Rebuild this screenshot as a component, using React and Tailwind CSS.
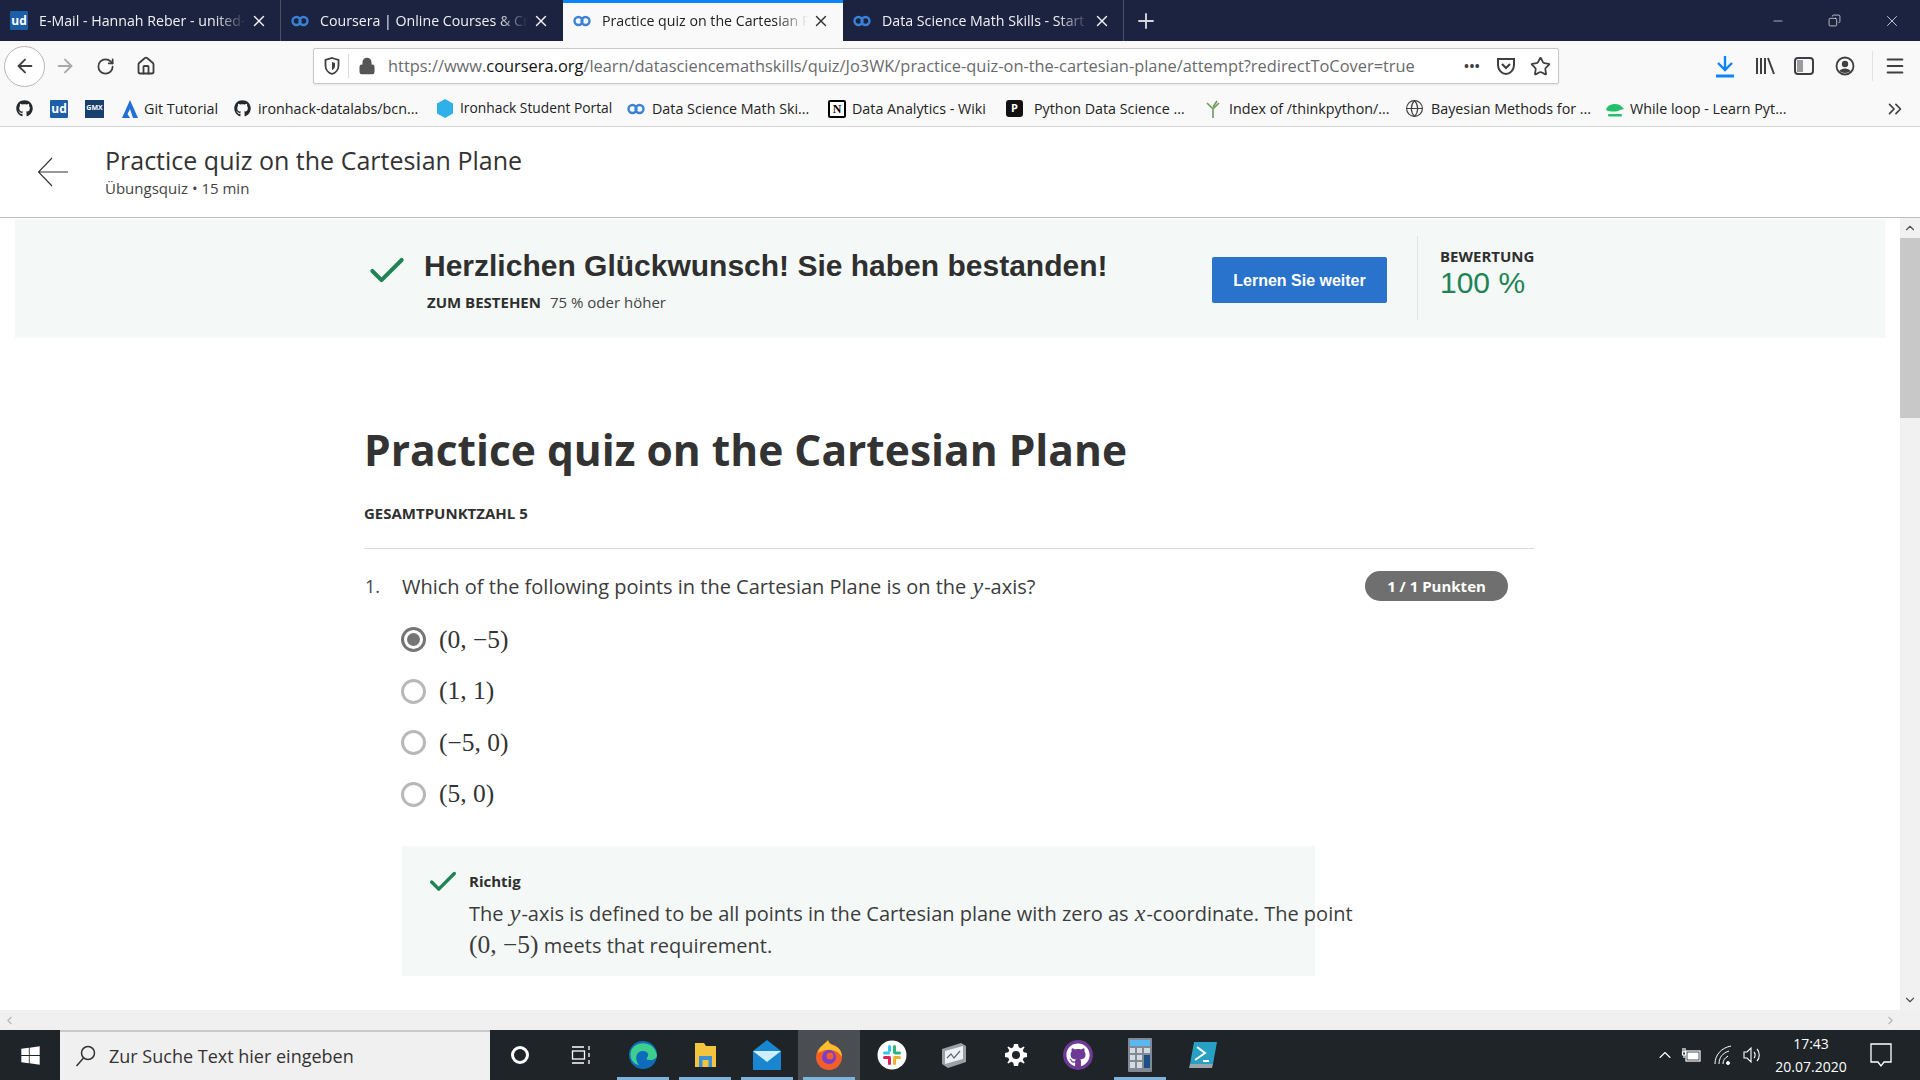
import React from "react";
import { ArrowLeft, ArrowRight, RotateCw, Home, Lock, Star, ChevronsRight, Globe, X, Plus, Minus, ChevronUp, ChevronDown, ChevronLeft, ChevronRight, Check, Menu, Copy, ChevronUp as Caret } from "lucide-react";
import { FaGithub, FaWindows } from "react-icons/fa";

const Co = () => (
  <svg width="18" height="12" viewBox="0 0 18 12" className="shrink-0">
    <circle cx="5.5" cy="6" r="4" fill="none" stroke="#3b82d6" strokeWidth="2.4" />
    <circle cx="12.5" cy="6" r="4" fill="none" stroke="#3b82d6" strokeWidth="2.4" />
  </svg>
);
const Ud = ({ s = "w-[18px] h-[19px] text-[12px]" }) => (
  <div className={`${s} bg-[#1d5ea8] text-white font-bold flex items-center justify-center leading-none shrink-0 rounded-[1px]`}>ud</div>
);

const tabs = [
  { t: "E-Mail - Hannah Reber - united-internet", i: <Ud />, w: "w-[281px]", b: true },
  { t: "Coursera | Online Courses & Credentials", i: <Co />, w: "w-[282px]" },
  { t: "Practice quiz on the Cartesian Plane", i: <Co />, w: "w-[280px]", a: true },
  { t: "Data Science Math Skills - Start here", i: <Co />, w: "w-[281px]", b: true },
];

const marks = [
  { w: "w-[35px]", i: <FaGithub className="w-[17px] h-[17px] text-[#24292e] ml-[1px]" /> },
  { w: "w-[35px]", i: <Ud s="w-[18px] h-[18px] text-[12px]" /> },
  { w: "w-[36px]", i: <div className="w-[19px] h-[18px] bg-[#17406f] text-white text-[7px] font-bold flex items-center justify-center">GMX</div> },
  { w: "w-[113px]", i: <svg width="18" height="18" viewBox="0 0 18 18" className="mr-[5px]"><path d="M9 0 L17 18 L12 18 L9 9 L6.5 14 L9 18 L1 18 Z" fill="#1f6fd6" /></svg>, t: "Git Tutorial" },
  { w: "w-[201px]", i: <FaGithub className="w-[17px] h-[17px] text-[#24292e] mr-[7px]" />, t: "ironhack-datalabs/bcn..." },
  { w: "w-[192px]", i: <svg width="18" height="19" viewBox="0 0 18 19" className="mr-[6px] ml-[1px]"><path d="M9 0 L17 4.5 V14.5 L9 19 L1 14.5 V4.5 Z" fill="#2db1e8" /></svg>, t: "Ironhack Student Portal", c: "text-[13.8px]" },
  { w: "w-[201px]", i: <span className="mr-[7px] flex"><Co /></span>, t: "Data Science Math Ski..." },
  { w: "w-[178px]", i: <div className="w-[18px] h-[18px] border-2 border-black bg-white text-black text-[12px] font-bold font-['Liberation_Serif',serif] flex items-center justify-center mr-[6px] rounded-[2px]">N</div>, t: "Data Analytics - Wiki" },
  { w: "w-[199px]", i: <div className="w-[17px] h-[17px] bg-[#111] text-white text-[11px] font-bold flex items-center justify-center mr-[11px] rounded-[3px]">P</div>, t: "Python Data Science ..." },
  { w: "w-[200px]", i: <svg width="16" height="18" viewBox="0 0 16 18" className="mr-[8px]"><path d="M8 18 V8 M8 9 L2 3 M8 9 L14 3 M8 7 L12 1" stroke="#6f9a5c" strokeWidth="1.6" fill="none" /></svg>, t: "Index of /thinkpython/..." },
  { w: "w-[200px]", i: <Globe className="w-[19px] h-[19px] text-[#444] mr-[7px]" strokeWidth={1.5} />, t: "Bayesian Methods for ..." },
  { w: "w-[279px]", i: <svg width="20" height="16" viewBox="0 0 20 16" className="mr-[5px]"><path d="M1 9 C2 2 14 1 17 6 L19 8 L15 9 C12 11 5 11 1 9 Z" fill="#21c26b" /><rect x="3" y="13" width="14" height="2.5" rx="1" fill="#21c26b" /></svg>, t: "While loop - Learn Pyt..." },
];

const Tb = ({ w, active, line, children }) => (
  <div className={`${w} h-[50px] relative flex items-center justify-center ${active ? "bg-[#4a4e52]" : ""}`}>
    {children}
    {line && <div className={`absolute bottom-0 left-[5px] right-[5px] h-[3px] bg-[#7db4de]`} />}
  </div>
);

const options = ["(0, −5)", "(1, 1)", "(−5, 0)", "(5, 0)"];

export default function App() {
  return (
    <div className="w-[1920px] h-[1080px] overflow-hidden flex flex-col font-['Open_Sans',sans-serif] bg-white text-[#3c3c3c]">
      {/* tab strip */}
      <div className="h-[41px] bg-[#1c2340] flex shrink-0 text-[14.2px]">
        {tabs.map((tab) => (
          <div key={tab.t} className={`${tab.w} h-[41px] flex items-center pl-[10px] pr-[13px] relative ${tab.a ? "bg-[#f9f9fa] text-[#222]" : "text-[#f0f0f2]"}`}>
            {tab.a && <div className="absolute top-0 left-0 right-0 h-[3px] bg-[#0a84ff]" />}
            {tab.b && <div className="absolute right-0 top-0 bottom-0 w-px bg-[#4a5068]" />}
            <div className="w-[19px] flex items-center">{tab.i}</div>
            <div className="ml-[10px] flex-1 overflow-hidden whitespace-nowrap [mask-image:linear-gradient(to_right,black_85%,transparent_100%)]">{tab.t}</div>
            <X className={`w-[18px] h-[18px] ml-[4px] shrink-0 ${tab.a ? "text-[#333]" : "text-[#f0f0f2]"}`} strokeWidth={1.9} />
          </div>
        ))}
        <div className="w-[43px] flex items-center justify-center"><Plus className="w-[24px] h-[24px] text-[#d6d7dc]" strokeWidth={1.9} /></div>
        <div className="flex-1" />
        <div className="w-[57px] flex items-center justify-center"><Minus className="w-[14px] h-[14px] text-[#e6e6ea]" strokeWidth={1.2} /></div>
        <div className="w-[57px] flex items-center justify-center"><Copy className="w-[13px] h-[13px] text-[#e6e6ea] -scale-x-100" strokeWidth={1.4} /></div>
        <div className="w-[57px] flex items-center justify-center"><X className="w-[18px] h-[18px] text-[#e6e6ea]" strokeWidth={1.1} /></div>
      </div>

      {/* toolbar */}
      <div className="h-[50px] bg-[#f9f9fa] flex items-center shrink-0 relative">
        <div className="w-[41px] h-[41px] ml-[4px] rounded-full border border-[#b5b5b5] bg-white flex items-center justify-center"><ArrowLeft className="w-[22px] h-[22px] text-[#3f3f42]" strokeWidth={2} /></div>
        <ArrowRight className="w-[22px] h-[22px] ml-[9px] text-[#a8a8aa]" strokeWidth={2} />
        <RotateCw className="w-[19px] h-[19px] ml-[20px] text-[#3f3f42]" strokeWidth={2.2} />
        <Home className="w-[20px] h-[20px] ml-[21px] text-[#3f3f42]" strokeWidth={2.2} />
        <div className="w-[1246px] h-[36px] ml-[157px] bg-white border border-[#c8c8c8] rounded-[2px] flex items-center shadow-[0_1px_2px_rgba(0,0,0,0.08)]">
          <svg width="16" height="18" viewBox="0 0 16 18" className="ml-[10px]"><path d="M8 1 L14.5 3 V9 C14.5 13 11 16 8 17 C5 16 1.5 13 1.5 9 V3 Z" fill="none" stroke="#3f3f42" strokeWidth="1.8" /><path d="M8 5 L11 6 V9 C11 11 9.5 12.5 8 13 Z" fill="#3f3f42" /></svg>
          <div className="w-px h-[24px] bg-[#dcdcdc] ml-[8px]" />
          <Lock className="w-[18px] h-[18px] ml-[9px] text-[#555] fill-[#555]" strokeWidth={2} />
          <div className="ml-[12px] text-[16.4px] text-[#6a6a6d] whitespace-nowrap w-[1029px] overflow-hidden">https://www.<span className="text-[#111]">coursera.org</span>/learn/datasciencemathskills/quiz/Jo3WK/practice-quiz-on-the-cartesian-plane/attempt?redirectToCover=true</div>
          <div className="ml-[47px] text-[#3f3f42] text-[13px] font-bold tracking-[0.5px] leading-none">•••</div>
          <svg width="20" height="20" viewBox="0 0 20 20" className="ml-[16px]"><path d="M2 3 H18 V9 C18 14 14 18 10 18 C6 18 2 14 2 9 Z" fill="none" stroke="#3f3f42" strokeWidth="2" /><path d="M6 8 L10 12 L14 8" fill="none" stroke="#3f3f42" strokeWidth="2.2" /></svg>
          <Star className="w-[21px] h-[21px] ml-[14px] text-[#3f3f42]" strokeWidth={2} />
        </div>
        <svg width="22" height="24" viewBox="0 0 22 24" fill="none" stroke="#0a84ff" strokeWidth="2.4" className="ml-[155px]"><path d="M11 2 V15 M4 9 L11 16 L18 9" /><path d="M2 22 H20" strokeWidth="3" /></svg>
        <svg width="20" height="20" viewBox="0 0 20 20" className="ml-[19px]"><path d="M2 2 V18 M6 2 V18 M10 2 V18 M13 2 L19 18" fill="none" stroke="#3f3f42" strokeWidth="2" /></svg>
        <svg width="20" height="20" viewBox="0 0 20 20" className="ml-[19px]"><rect x="1" y="2" width="18" height="16" rx="3" fill="none" stroke="#3f3f42" strokeWidth="2" /><rect x="3" y="4" width="6" height="12" fill="#3f3f42" opacity="0.5" /></svg>
        <svg width="20" height="20" viewBox="0 0 20 20" className="ml-[21px]"><circle cx="10" cy="10" r="8.5" fill="none" stroke="#3f3f42" strokeWidth="1.8" /><circle cx="10" cy="8" r="3.2" fill="#3f3f42" /><path d="M4.5 15 C6 11.5 14 11.5 15.5 15 C13 17.5 7 17.5 4.5 15 Z" fill="#3f3f42" /></svg>
        <div className="w-px h-[30px] bg-[#e2e2e2] ml-[17px]" />
        <Menu className="w-[22px] h-[22px] ml-[11px] text-[#3f3f42]" strokeWidth={2.2} />
      </div>

      {/* bookmarks */}
      <div className="h-[36px] bg-[#f9f9fa] border-b border-[#d4d4d6] flex items-center pl-[15px] shrink-0 text-[14.3px] text-[#222]">
        {marks.map((m, i) => (
          <div key={i} className={`${m.w} flex items-center whitespace-nowrap shrink-0`}>
            {m.i}
            {m.t && <span className={m.c}>{m.t}</span>}
          </div>
        ))}
        <ChevronsRight className="w-[22px] h-[22px] text-[#3f3f42]" strokeWidth={1.8} />
      </div>

      {/* page header */}
      <div className="h-[91px] bg-white border-b border-[#bdbdbd] flex items-center shrink-0">
        <svg width="32" height="30" viewBox="0 0 32 30" className="ml-[37px]"><path d="M31 15 H2 M15 1 L1.5 15 L15 29" fill="none" stroke="#333" strokeWidth="1.1" /></svg>
        <div className="ml-[36px] -mt-[2px]">
          <div className="text-[25px] leading-[32px] text-[#333]">Practice quiz on the Cartesian Plane</div>
          <div className="text-[15px] leading-[20px] mt-[2px] text-[#444]">Übungsquiz • 15 min</div>
        </div>
      </div>

      {/* main */}
      <div className="flex-1 flex min-h-0">
        <div className="flex-1 overflow-hidden bg-white">
          <div className="mx-[15px] mt-px h-[119px] bg-[#f4f9f8] flex">
            <Check className="w-[44px] h-[44px] shrink-0 ml-[350px] mt-[30px] text-[#1f8354]" strokeWidth={2.2} />
            <div className="ml-[15px] w-[788px]">
              <div className="text-[30px] leading-[40px] mt-[27px] font-bold font-['Liberation_Sans',sans-serif] text-[#2f2f2f] whitespace-nowrap">Herzlichen Glückwunsch! Sie haben bestanden!</div>
              <div className="flex text-[15px] leading-[20px] mt-[6px] ml-[3px]"><span className="font-bold text-[#2f2f2f]">ZUM BESTEHEN</span><span className="ml-[9px] text-[#444]">75 % oder höher</span></div>
            </div>
            <div className="w-[175px] h-[46px] mt-[38px] pt-[1px] bg-[#2a73cc] rounded-[2px] flex items-center justify-center text-white font-bold text-[16px] font-['Liberation_Sans',sans-serif]">Lernen Sie weiter</div>
            <div className="w-px h-[84px] mt-[17px] ml-[30px] bg-[#dfe6e4]" />
            <div className="ml-[22px] mt-[27px]">
              <div className="text-[15px] leading-[20px] font-bold text-[#2f2f2f]">BEWERTUNG</div>
              <div className="text-[30px] leading-[34px] text-[#1f8354] font-['Liberation_Sans',sans-serif]">100 %</div>
            </div>
          </div>

          <div className="ml-[364px] w-[1170px]">
            <h1 className="mt-[82px] text-[42.5px] leading-[60px] font-bold text-[#333] whitespace-nowrap">Practice quiz on the Cartesian Plane</h1>
            <div className="mt-[23px] text-[15px] leading-[20px] font-bold text-[#2f2f2f]">GESAMTPUNKTZAHL 5</div>
            <div className="mt-[25px] h-px bg-[#dcdcdc]" />
            <div className="mt-[22px] flex items-center h-[30px] w-[1144px]">
              <div className="w-[38px] text-[18px] text-[#444] pl-[1px]">1.</div>
              <div className="flex-1 text-[20px] whitespace-nowrap">Which of the following points in the Cartesian Plane is on the <i className="font-['Liberation_Serif',serif] text-[24px] mx-[1px]">y</i>-axis?</div>
              <div className="w-[143px] h-[30px] rounded-full bg-[#6f6f6f] text-white text-[15px] font-bold flex items-center justify-center">1 / 1 Punkten</div>
            </div>
            <div className="mt-[13px] ml-[37px]">
              {options.map((o, i) => (
                <div key={o} className="h-[51.5px] flex items-center">
                  <div className={`w-[25px] h-[25px] rounded-full border-[3px] bg-white flex items-center justify-center ${i === 0 ? "border-[#757575]" : "border-[#b8b8b8]"}`}>
                    {i === 0 && <div className="w-[13px] h-[13px] rounded-full bg-[#757575]" />}
                  </div>
                  <div className="ml-[13px] text-[25.5px] font-['Liberation_Serif',serif] text-[#333] whitespace-nowrap">{o}</div>
                </div>
              ))}
            </div>
            <div className="mt-[26px] ml-[38px] w-[913px] h-[130px] bg-[#f4f9f8] flex">
              <Check className="w-[34px] h-[34px] shrink-0 ml-[24px] mt-[19px] text-[#1f8354]" strokeWidth={2.4} />
              <div className="ml-[9px] mt-[24px] whitespace-nowrap">
                <div className="text-[15px] leading-[22px] font-bold text-[#2f2f2f]">Richtig</div>
                <div className="mt-[6px] text-[20px] leading-[30.5px]">
                  The <i className="font-['Liberation_Serif',serif] text-[24px] mx-[1px]">y</i>-axis is defined to be all points in the Cartesian plane with zero as <i className="font-['Liberation_Serif',serif] text-[24px] mx-[1px]">x</i>-coordinate. The point
                  <br />
                  <span className="font-['Liberation_Serif',serif] text-[25.5px] leading-[30px]">(0, −5)</span> meets that requirement.
                </div>
              </div>
            </div>
          </div>
        </div>
        <div className="w-[20px] bg-[#f1f1f1] flex flex-col items-center shrink-0">
          <ChevronUp className="w-[14px] h-[14px] mt-[3px] text-[#505050]" strokeWidth={2} />
          <div className="w-[20px] h-[180px] mt-[3px] bg-[#c8c8c8]" />
          <div className="flex-1" />
          <ChevronDown className="w-[14px] h-[14px] mb-[3px] text-[#505050]" strokeWidth={2} />
        </div>
      </div>

      {/* horizontal scrollbar */}
      <div className="h-[20px] bg-[#f0f0f0] flex items-center justify-between shrink-0 pl-[3px] pr-[23px]">
        <ChevronLeft className="w-[13px] h-[13px] text-[#b5b5b5]" strokeWidth={2} />
        <ChevronRight className="w-[13px] h-[13px] text-[#b5b5b5]" strokeWidth={2} />
      </div>

      {/* taskbar */}
      <div className="h-[50px] bg-[#1e2428] flex items-center shrink-0 text-white">
        <div className="w-[60px] flex items-center justify-center"><FaWindows className="w-[21px] h-[21px] text-white" /></div>
        <div className="w-[430px] h-[50px] bg-[#f0f0f0] border-t-2 border-[#c9c9c9] flex items-center pl-[15px] text-[18px] text-[#333]">
          <svg width="21" height="22" viewBox="0 0 21 22" fill="none" stroke="#333" strokeWidth="1.5"><circle cx="13" cy="8" r="6.5" /><path d="M8.5 13 L1.5 21" /></svg>
          <span className="ml-[13px]">Zur Suche Text hier eingeben</span>
        </div>
        <Tb w="w-[60px]"><div className="w-[18px] h-[18px] rounded-full border-[3px] border-white" /></Tb>
        <Tb w="w-[62px]">
          <svg width="20" height="20" viewBox="0 0 20 20" fill="none" stroke="#fff" strokeWidth="1.3"><path d="M1 2 H13 M1 18 H13 M18 1 V5 M18 8 V12 M18 15 V19" /><rect x="1.5" y="6" width="12" height="8" /></svg>
        </Tb>
        <Tb w="w-[62px]" line>
          <svg width="30" height="30" viewBox="0 0 30 30"><circle cx="15" cy="15" r="14" fill="#0f6cbd" /><path d="M3 11 C7 0 26 0 29 15 C29 20 22 21 17 19 C22 17 21 11 15 11 C8 11 6 19 11 25 C5 24 1 18 3 11 Z" fill="#3ecf8e" /><circle cx="15" cy="17" r="4" fill="#0f6cbd" /></svg>
        </Tb>
        <Tb w="w-[62px]" line>
          <svg width="28" height="28" viewBox="0 0 28 28"><path d="M4 2 H13 L15 5 H25 V26 H4 Z" fill="#f3c53f" /><rect x="8" y="15" width="13" height="11" fill="#3d8fd6" /><rect x="11.5" y="19" width="6" height="7" fill="#f3c53f" /></svg>
        </Tb>
        <Tb w="w-[62px]" line>
          <svg width="30" height="32" viewBox="0 0 30 32"><path d="M15 1 L29 12 V31 H1 V12 Z" fill="#1a86d0" /><path d="M1 12 H29 L15 23 Z" fill="#cdeefb" /></svg>
        </Tb>
        <Tb w="w-[62px]" active line>
          <svg width="32" height="32" viewBox="0 0 32 32"><circle cx="16" cy="18" r="13" fill="#f25f2a" /><path d="M5 14 C6 7 12 5 15 1 C16 5 20 6 22 7 C27 9 29 14 29 18 C24 9 12 9 5 14 Z" fill="#ffbf2c" /><circle cx="16" cy="18" r="7" fill="#7a3ec8" /><circle cx="17" cy="17" r="3.5" fill="#f25f2a" /></svg>
        </Tb>
        <Tb w="w-[63px]">
          <svg width="30" height="30" viewBox="0 0 30 30"><circle cx="15" cy="15" r="14.5" fill="#fff" /><rect x="6" y="11.5" width="7" height="3" rx="1.5" fill="#36c5f0" /><rect x="11" y="5" width="3" height="7" rx="1.5" fill="#36c5f0" /><rect x="16" y="5" width="3" height="9" rx="1.5" fill="#2eb67d" /><rect x="17" y="11.5" width="7" height="3" rx="1.5" fill="#2eb67d" /><rect x="16" y="16" width="8" height="3" rx="1.5" fill="#ecb22e" /><rect x="16" y="18" width="3" height="7" rx="1.5" fill="#ecb22e" /><rect x="11" y="16" width="3" height="9" rx="1.5" fill="#e01e5a" /><rect x="6" y="16" width="7" height="3" rx="1.5" fill="#e01e5a" /></svg>
        </Tb>
        <Tb w="w-[62px]">
          <svg width="30" height="30" viewBox="0 0 30 30"><path d="M3 9 L22 3 L27 6 V22 L9 28 L3 24 Z" fill="#9aa0a6" /><path d="M6 11 L24 6 V19 L6 24 Z" fill="#eef1f4" /><path d="M8 18 L12 14 L15 18 L21 11" stroke="#5a6a7a" strokeWidth="1.2" fill="none" /></svg>
        </Tb>
        <Tb w="w-[62px]">
          <svg width="24" height="24" viewBox="0 0 24 24" fill="#fff"><path fillRule="evenodd" d="M10 1 H14 L14.7 4.3 L16.8 5.2 L19.7 3.4 L20.6 4.3 L18.8 7.2 L19.7 9.3 L23 10 V14 L19.7 14.7 L18.8 16.8 L20.6 19.7 L19.7 20.6 L16.8 18.8 L14.7 19.7 L14 23 H10 L9.3 19.7 L7.2 18.8 L4.3 20.6 L3.4 19.7 L5.2 16.8 L4.3 14.7 L1 14 V10 L4.3 9.3 L5.2 7.2 L3.4 4.3 L4.3 3.4 L7.2 5.2 L9.3 4.3 Z M12 8 A4 4 0 1 0 12 16 A4 4 0 1 0 12 8 Z" /></svg>
        </Tb>
        <Tb w="w-[62px]">
          <div className="w-[30px] h-[30px] rounded-full bg-[#6e3a96] flex items-center justify-center"><FaGithub className="w-[24px] h-[24px] text-white" /></div>
        </Tb>
        <Tb w="w-[62px]" line>
          <svg width="24" height="34" viewBox="0 0 24 34"><rect width="24" height="34" rx="1" fill="#7f8a94" /><rect x="2" y="2" width="20" height="6" fill="#59b8ef" /><path d="M2 10 H7 V15 H2 Z M9 10 H14 V15 H9 Z M2 17 H7 V22 H2 Z M9 17 H14 V22 H9 Z M2 24 H7 V30 H2 Z M9 24 H14 V30 H9 Z" fill="#d6dade" /><rect x="16" y="10" width="6" height="5" fill="#d6dade" /><rect x="16" y="17" width="6" height="13" fill="#1d4f86" /></svg>
        </Tb>
        <Tb w="w-[63px]">
          <svg width="30" height="30" viewBox="0 0 30 30"><path d="M6 2 H29 L25 24 H2 Z" fill="#27a0c4" /><path d="M2 24 H25 L24 28 H1 Z" fill="#9aa4ab" /><path d="M9 7 L17 13 L7 20 M15 21 H21" stroke="#fff" strokeWidth="2" fill="none" /></svg>
        </Tb>
        <div className="flex-1" />
        <Caret className="w-[20px] h-[20px] text-white mr-[6px]" strokeWidth={1.3} />
        <svg width="20" height="20" viewBox="0 0 20 20" fill="none" stroke="#fff" strokeWidth="1.2" className="mr-[12px]"><rect x="5" y="6" width="14" height="10" /><rect x="7" y="8" width="10" height="6" fill="#fff" /><path d="M2 3 V7 M4 3 V7 M1.5 7 H4.5 V10 H1.5 Z M3 10 V13" /></svg>
        <svg width="20" height="20" viewBox="0 0 20 20" fill="none" stroke="#fff" strokeWidth="1" className="mr-[9px]"><path d="M2 19 C2 10 8 3 18 1 M6 19 C6 12 10 8 16 6 M10 19 C10 15 12 13 15 11" /><circle cx="15" cy="18" r="1.5" fill="#fff" /></svg>
        <svg width="20" height="20" viewBox="0 0 20 20" fill="none" stroke="#fff" strokeWidth="1.1" className="mr-[13px]"><path d="M2 7 H5 L9 3 V17 L5 13 H2 Z M12 7 C13.5 8.5 13.5 11.5 12 13 M15 4 C18 7 18 13 15 16" /></svg>
        <div className="w-[72px] text-center text-[14px] leading-[23px] text-white">
          <div>17:43</div>
          <div>20.07.2020</div>
        </div>
        <svg width="24" height="26" viewBox="0 0 24 26" fill="none" stroke="#fff" strokeWidth="1.3" className="ml-[22px] mr-[27px]"><path d="M2 2 H22 V20 H15 L12 24 L9 20 H2 Z" /></svg>
      </div>
    </div>
  );
}
